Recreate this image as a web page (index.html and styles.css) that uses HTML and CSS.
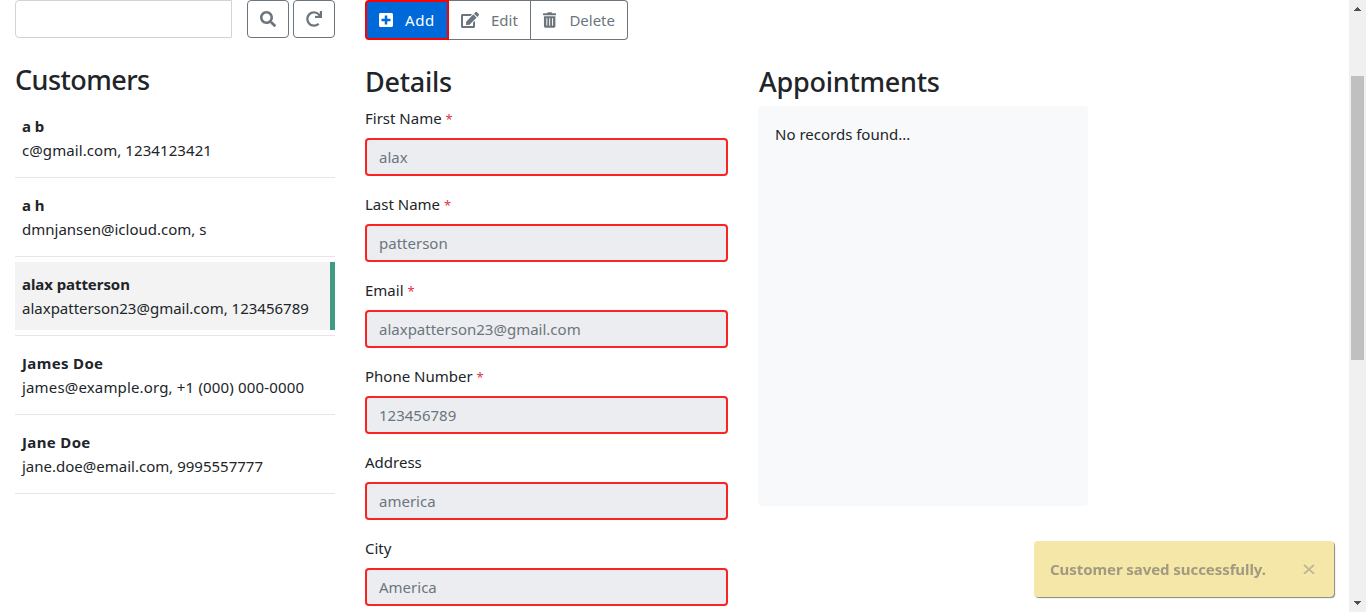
FILE: index.html
```html
<!DOCTYPE html>
<html lang="en">
<head>
<meta charset="utf-8">
<title>Customers</title>
<link rel="stylesheet" href="styles.css">
</head>
<body>
<div class="page">
  <main class="columns">
    <section class="customers">
      <form class="search">
        <input class="search-input" type="text" aria-label="Search">
        <button class="icon-btn" type="button" aria-label="Search"><svg width="16" height="16" viewBox="0 0 512 512"><path fill="currentColor" d="M505 442.700L405.300 343c-4.500-4.500-10.600-7-17-7H372c27.600-35.300 44-79.700 44-128C416 93.100 322.900 0 208 0S0 93.100 0 208s93.100 208 208 208c48.300 0 92.700-16.400 128-44v16.300c0 6.400 2.500 12.500 7 17l99.700 99.700c9.400 9.400 24.600 9.400 33.900 0l28.300-28.300c9.400-9.400 9.400-24.600.1-34zM208 336c-70.700 0-128-57.200-128-128 0-70.700 57.200-128 128-128 70.700 0 128 57.200 128 128 0 70.700-57.200 128-128 128z"/></svg></button>
        <button class="icon-btn" type="button" aria-label="Clear"><svg width="16" height="16" viewBox="0 0 512 512"><path fill="currentColor" d="M500.330 0h-47.410a12 12 0 0 0-12 12.570l4 82.760A247.420 247.420 0 0 0 256 8C119.340 8 7.900 119.530 8 256.190 8.100 393.070 119.100 504 256 504a247.100 247.100 0 0 0 166.180-63.910 12 12 0 0 0 .48-17.430l-34-34a12 12 0 0 0-16.380-.55A176 176 0 1 1 402.100 157.800l-101.530-4.870a12 12 0 0 0-12.570 12v47.410a12 12 0 0 0 12 12h200.330a12 12 0 0 0 12-12V12a12 12 0 0 0-12-12z"/></svg></button>
      </form>
      <h3 class="title">Customers</h3>
      <div class="results">
        <div class="entry"><strong class="name">a b</strong><span class="info roomy">c@gmail.com, 1234123421</span></div>
        <div class="entry"><strong class="name">a h</strong><span class="info">dmnjansen@icloud.com, s</span></div>
        <div class="entry selected"><strong class="name">alax patterson</strong><span class="info">alaxpatterson23@gmail.com, 123456789</span></div>
        <div class="entry"><strong class="name wide">James Doe</strong><span class="info wide">james@example.org, +1 (000) 000-0000</span></div>
        <div class="entry"><strong class="name wide">Jane Doe</strong><span class="info">jane.doe@email.com, 9995557777</span></div>
      </div>
    </section>
    <section class="details">
      <div class="toolbar">
        <button class="tool add" type="button"><svg width="14" height="16" viewBox="0 0 448 512"><path fill="currentColor" d="M400 32H48C21.500 32 0 53.500 0 80v352c0 26.500 21.500 48 48 48h352c26.500 0 48-21.500 48-48V80c0-26.500-21.500-48-48-48zm-32 252c0 6.600-5.400 12-12 12h-92v92c0 6.600-5.400 12-12 12h-56c-6.600 0-12-5.400-12-12v-92H92c-6.600 0-12-5.400-12-12v-56c0-6.600 5.400-12 12-12h92v-92c0-6.600 5.400-12 12-12h56c6.600 0 12 5.400 12 12v92h92c6.600 0 12 5.400 12 12v56z"/></svg><span>Add</span></button>
        <button class="tool edit" type="button"><svg width="18" height="16" viewBox="0 0 576 512"><path fill="currentColor" d="M402.600 83.200l90.200 90.200c3.800 3.800 3.800 10 0 13.800L274.400 405.600l-92.800 10.300c-12.400 1.400-22.900-9.100-21.500-21.500l10.300-92.800L388.800 83.200c3.800-3.800 10-3.800 13.800 0zm162-22.900l-48.800-48.800c-15.200-15.200-39.900-15.200-55.200 0l-35.400 35.400c-3.800 3.800-3.800 10 0 13.800l90.200 90.200c3.800 3.800 10 3.800 13.800 0l35.400-35.400c15.200-15.300 15.200-40 0-55.200zM384 346.200V448H64V128h229.800c3.200 0 6.200-1.300 8.500-3.500l40-40c7.600-7.600 2.200-20.500-8.500-20.500H48C21.500 64 0 85.500 0 112v352c0 26.500 21.500 48 48 48h352c26.500 0 48-21.500 48-48V306.200c0-10.700-12.900-16-20.500-8.500l-40 40c-2.200 2.300-3.500 5.300-3.500 8.500z"/></svg><span>Edit</span></button>
        <button class="tool delete" type="button"><svg width="14" height="16" viewBox="0 0 448 512"><path fill="currentColor" fill-rule="evenodd" d="M32 464a48 48 0 0 0 48 48h288a48 48 0 0 0 48-48V128H32zm272-256a16 16 0 0 1 32 0v224a16 16 0 0 1-32 0zm-96 0a16 16 0 0 1 32 0v224a16 16 0 0 1-32 0zm-96 0a16 16 0 0 1 32 0v224a16 16 0 0 1-32 0zM432 32H312l-9.400-18.700A24 24 0 0 0 281.100 0H166.800a23.720 23.720 0 0 0-21.400 13.300L136 32H16A16 16 0 0 0 0 48v32a16 16 0 0 0 16 16h416a16 16 0 0 0 16-16V48a16 16 0 0 0-16-16z"/></svg><span>Delete</span></button>
      </div>
      <h3 class="title">Details</h3>
      <div class="field"><label for="first">First Name <span class="req">*</span></label><input id="first" value="alax" disabled></div>
      <div class="field"><label for="last">Last Name <span class="req">*</span></label><input id="last" value="patterson" disabled></div>
      <div class="field"><label for="email">Email <span class="req">*</span></label><input id="email" value="alaxpatterson23@gmail.com" disabled></div>
      <div class="field"><label for="phone">Phone Number <span class="req">*</span></label><input id="phone" value="123456789" disabled></div>
      <div class="field"><label for="address">Address</label><input id="address" value="america" disabled></div>
      <div class="field"><label for="city">City</label><input id="city" value="America" disabled></div>
    </section>
    <section class="appointments">
      <h3 class="title">Appointments</h3>
      <div class="card">No records found...</div>
    </section>
  </main>
  <div class="scrollbar">
    <svg width="17" height="17" viewBox="0 0 17 17" shape-rendering="crispEdges"><path fill="#505050" d="M8 7h1v1h1v1h1v1h1v1H5v-1h1V9h1V8h1z"/></svg>
    <div class="thumb"></div>
    <svg class="down" width="17" height="17" viewBox="0 0 17 17" shape-rendering="crispEdges"><path fill="#505050" d="M5 6h7v1h-1v1h-1v1H9v1H8V9H7V8H6V7H5z"/></svg>
  </div>
</div>
<div class="toast" role="status"><strong>Customer saved successfully.</strong><svg class="close" width="12" height="14" viewBox="0 0 12 14"><path d="M1 4l10 9M11 4L1 13" stroke="#fbf6dc" stroke-width="2"/><path d="M1 3l10 9M11 3L1 12" stroke="#c4ba8a" stroke-width="2.300"/></svg></div>
</body>
</html>
```

FILE: styles.css
```css
* { box-sizing: border-box; }
body {
  margin: 0;
  height: 612px;
  overflow: hidden;
  background: #fff;
  color: #212529;
  font: 400 15px/24px "Noto Sans", "Open Sans", sans-serif;
}
button, input { font: inherit; letter-spacing: inherit; }
.page { display: flex; height: 612px; overflow: hidden; }
.columns {
  flex: 1;
  display: grid;
  grid-template-columns: 320px 363px 330px;
  column-gap: 30px;
  align-items: start;
  padding-left: 15px;
}
.title { margin: 0; font-size: 27px; line-height: 34px; font-weight: 500; letter-spacing: -0.25px; }

.search { display: flex; height: 38px; }
.search-input {
  width: 217px;
  margin-right: 15px;
  border: 1px solid #ced4da;
  border-radius: 4px 0 0 4px;
}
.icon-btn {
  display: grid;
  place-items: center;
  width: 42px;
  padding: 0;
  border: 1px solid #6c757d;
  border-radius: 4px;
  background: #fff;
  color: #6c757d;
}
.icon-btn + .icon-btn { margin-left: 4px; }
.customers .title { margin: 25px 0 7px; letter-spacing: -0.55px; }
.entry {
  height: 68px;
  margin-bottom: 11px;
  padding: 10px 7px;
  position: relative;
}
.entry::after {
  content: "";
  position: absolute;
  left: 0;
  right: 0;
  bottom: -6px;
  height: 1px;
  background: #e5e5e5;
}
.entry.selected { background: #f3f3f3; border-right: 5px solid #429a82; }
.entry.selected::after { right: -5px; }
.name, .info { display: block; white-space: nowrap; }
.name { font-weight: 700; letter-spacing: -0.07px; }
.name.wide { letter-spacing: 0.35px; }
.info.wide { letter-spacing: 0.16px; }
.info.roomy { letter-spacing: 0.08px; }

.toolbar { display: flex; width: 263px; height: 40px; }
.tool {
  display: flex;
  align-items: center;
  padding: 0 12px;
  border: 1px solid #6c757d;
  background: #fff;
  color: #6c757d;
}
.tool.add {
  width: 84px;
  gap: 12px;
  border: 2px solid #f00;
  border-radius: 4px 0 0 4px;
  background: #0069d9;
  color: #fff;
  letter-spacing: 0.6px;
}
.tool.edit { width: 82px; gap: 12px; border-left: 0; }
.tool.delete { width: 97px; gap: 13px; border-left: 0; border-radius: 0 4px 4px 0; }
.details .title { margin: 25px 0 7px; }
.field { display: flex; flex-direction: column; gap: 8px; margin-bottom: 16px; }
.field label { height: 24px; }
.req { font-size: 13px; color: #dc3545; }
.field input {
  width: 100%;
  height: 38px;
  padding: 0 12px;
  border: 2px solid #fc2323;
  border-radius: 4px;
  background: #ebedf1;
  color: #6c757d;
}

.appointments .title { margin: 65px 0 7px; padding-left: 1px; }
.card {
  height: 400px;
  padding: 16px 17px;
  border-radius: 4px;
  background: #f8f9fb;
}

.scrollbar { display: flex; flex-direction: column; width: 17px; background: #f0f0f0; }
.scrollbar svg { display: block; }
.thumb { width: 13px; height: 284px; margin: 59px 0 0 2px; background: #c0c0c0; }
.down { margin-top: auto; }

.toast {
  position: fixed;
  left: 1034px;
  top: 541px;
  display: flex;
  align-items: center;
  justify-content: space-between;
  width: 300px;
  height: 56px;
  padding: 0 19px 0 16px;
  border-radius: 4px;
  background: #f5e7a8;
  box-shadow: 1px 1px 1px #858585;
  color: #a19a80;
}
.toast strong { font-weight: 700; letter-spacing: -0.07px; }
```
